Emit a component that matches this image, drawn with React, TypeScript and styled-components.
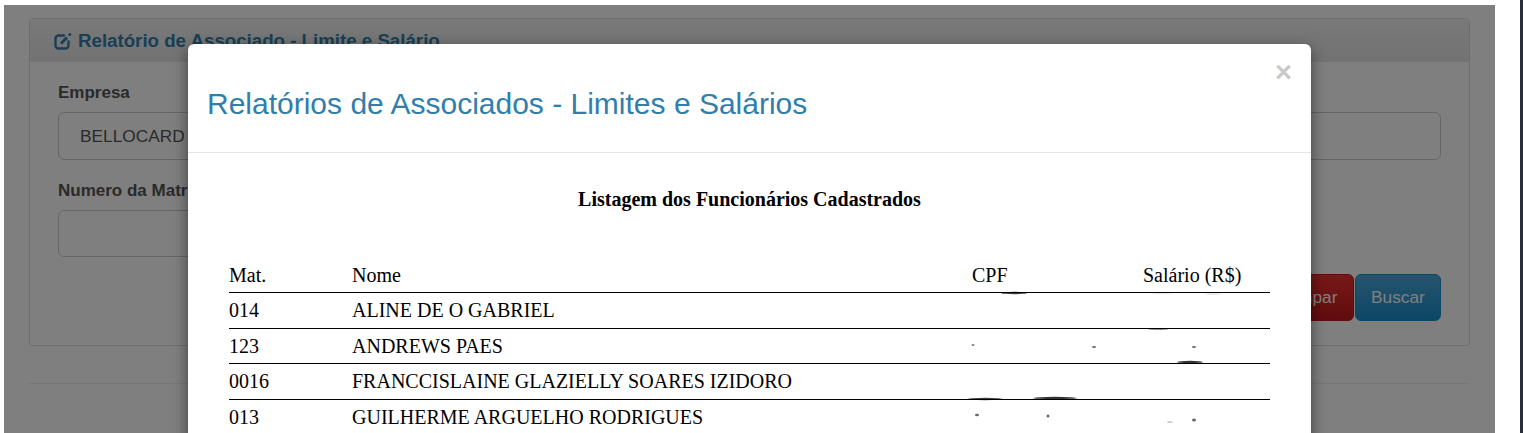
import React from "react";
import styled, { createGlobalStyle } from "styled-components";

const GlobalStyle = createGlobalStyle`
  html, body {
    margin: 0;
    height: 433px;
    overflow: hidden;
    background: #fff;
    font-family: "Liberation Sans", Arial, sans-serif;
    color: #555;
  }
`;

const Screen = styled.div`
  display: flex;
  height: 433px;
  padding: 5px 0 0 4px;
  box-sizing: border-box;
`;

const Page = styled.div`
  position: relative;
  width: 1491px;
  height: 428px;
  padding: 13px 25px 0;
  box-sizing: border-box;
  overflow: hidden;
  background: #fff;
  flex: none;
`;

const ScrollGutter = styled.div`
  width: 3px;
  height: 433px;
  margin: -5px 0 0 25px;
  background: #2a2e3a;
  flex: none;
`;

const Panel = styled.section`
  border: 1px solid #ddd;
  border-radius: 4px;
  height: 328px;
  box-sizing: border-box;
`;

const PanelHeading = styled.header`
  display: flex;
  align-items: center;
  gap: 6px;
  height: 43px;
  padding: 0 24px;
  box-sizing: border-box;
  background: linear-gradient(#f2f2f2, #e6e6e6);
  color: #317eac;
  font-size: 18.7px;
  font-weight: 700;
`;

const EditIcon = styled.svg`
  width: 18px;
  height: 18px;
  flex: none;
`;

const PanelBody = styled.div`
  display: flex;
  flex-direction: column;
  padding: 21px 28px 0;
`;

const Label = styled.label`
  font-size: 17px;
  font-weight: 700;
  line-height: 20px;
  margin-bottom: 9px;
`;

const Input = styled.div<{ $width?: string; $height: number }>`
  width: ${(p) => p.$width || "100%"};
  height: ${(p) => p.$height}px;
  padding-left: 21px;
  margin-bottom: 21px;
  display: flex;
  align-items: center;
  box-sizing: border-box;
  border: 1px solid #ccc;
  border-radius: 6px;
  font-size: 17.3px;
  color: #555;
`;

const Actions = styled.div`
  display: flex;
  justify-content: flex-end;
  gap: 1px;
  margin-top: -4px;
`;

const Button = styled.button<{ $top: string; $bottom: string; $width: number }>`
  width: ${(p) => p.$width}px;
  height: 47px;
  padding: 0;
  border: 1px solid ${(p) => p.$bottom};
  border-radius: 6px;
  background: linear-gradient(${(p) => p.$top}, ${(p) => p.$bottom});
  color: #fff;
  font-family: inherit;
  font-size: 17.3px;
`;

const Rule = styled.hr`
  margin: 37px 0 0;
  border: 0;
  border-top: 1px solid #eee;
`;

const Backdrop = styled.div`
  position: absolute;
  inset: 0;
  background: rgba(0, 0, 0, 0.5);
`;

const Modal = styled.div`
  position: absolute;
  left: 184px;
  top: 39px;
  width: 1123px;
  height: 500px;
  background: #fff;
  border-radius: 6px;
  box-shadow: 0 5px 15px rgba(0, 0, 0, 0.5);
`;

const ModalHeader = styled.header`
  display: flex;
  justify-content: space-between;
  height: 109px;
  padding: 0 19px;
  box-sizing: border-box;
  border-bottom: 1px solid #e5e5e5;
`;

const ModalTitle = styled.h4`
  margin: 41px 0 0;
  font-size: 30px;
  line-height: 38px;
  font-weight: 400;
  color: #317eac;
`;

const Close = styled.span`
  margin-top: 12px;
  font-size: 29px;
  line-height: 32px;
  font-weight: 700;
  color: #c9c9c9;
`;

const ModalBody = styled.div`
  position: relative;
  padding: 35px 41px 0;
  font-family: "Liberation Serif", "Times New Roman", serif;
  color: #000;
`;

const ReportTitle = styled.h2`
  margin: 0 0 52px;
  height: 22px;
  font-size: 20px;
  line-height: 22px;
  font-weight: 700;
  text-align: center;
`;

const Table = styled.table`
  width: 1041px;
  border-collapse: collapse;
  table-layout: fixed;
  font-size: 20px;
`;

const Head = styled.th<{ $width: number }>`
  width: ${(p) => p.$width}px;
  height: 30px;
  padding: 1px 0 0;
  box-sizing: border-box;
  font-weight: 400;
  text-align: left;
  vertical-align: top;
  line-height: 24px;
  border-bottom: 1px solid #000;
`;

const Cell = styled.td<{ $height: number; $last?: boolean }>`
  height: ${(p) => p.$height}px;
  padding: 0;
  line-height: 22px;
  border-bottom: ${(p) => (p.$last ? "0" : "1px solid #000")};
`;

const Smudges = styled.svg`
  position: absolute;
  left: 0;
  top: 0;
  width: 1123px;
  height: 400px;
  pointer-events: none;
`;

const rows = [
  { id: "014", name: "ALINE DE O GABRIEL", height: 35 },
  { id: "123", name: "ANDREWS PAES", height: 34 },
  { id: "0016", name: "FRANCCISLAINE GLAZIELLY SOARES IZIDORO", height: 35 },
  { id: "013", name: "GUILHERME ARGUELHO RODRIGUES", height: 35 },
];

// leftovers of the blurred CPF / salary values, in modal body coords
const marks = [
  [826, 140, 13, 1.2, 0.75],
  [974, 140, 11, 0.8, 0.12],
  [1025, 141, 9, 0.7, 0.1],
  [970, 176, 10, 1, 0.45],
  [785, 192, 1.5, 1, 0.5],
  [906, 194, 2, 1, 0.6],
  [1006, 194, 2, 1, 0.6],
  [1002, 209, 13, 1.2, 0.8],
  [797, 246, 18, 1.2, 0.75],
  [867, 245, 22, 1.2, 0.8],
  [789, 262, 2, 1.2, 0.6],
  [860, 263, 1.5, 1.6, 0.6],
  [982, 269, 3, 0.6, 0.4],
  [1006, 267, 2, 1.5, 0.6],
];

export default function App() {
  return (
    <>
      <GlobalStyle />
      <Screen>
        <Page>
          <Panel>
            <PanelHeading>
              <EditIcon viewBox="0 0 18 18" fill="none" stroke="currentColor">
                <path
                  d="M10 3.5H4.5A3 3 0 0 0 1.5 6.5v7a3 3 0 0 0 3 3h7a3 3 0 0 0 3-3V9.5"
                  strokeWidth="2.4"
                  strokeLinecap="round"
                />
                <path d="M7 11.5 13 5.5" strokeWidth="3" />
                <circle cx="15.8" cy="2.6" r="1.5" fill="currentColor" stroke="none" />
              </EditIcon>
              Relatório de Associado - Limite e Salário
            </PanelHeading>
            <PanelBody>
              <Label>Empresa</Label>
              <Input $height={48}>BELLOCARD</Input>
              <Label>Numero da Matrícula</Label>
              <Input $height={47} $width="600px" />
              <Actions>
                <Button $top="#f03030" $bottom="#c0181c" $width={86}>
                  Limpar
                </Button>
                <Button $top="#4ca8dc" $bottom="#1a8ccc" $width={86}>
                  Buscar
                </Button>
              </Actions>
            </PanelBody>
          </Panel>
          <Rule />
          <Backdrop />
          <Modal>
            <ModalHeader>
              <ModalTitle>Relatórios de Associados - Limites e Salários</ModalTitle>
              <Close>×</Close>
            </ModalHeader>
            <ModalBody>
              <ReportTitle>Listagem dos Funcionários Cadastrados</ReportTitle>
              <Table>
                <thead>
                  <tr>
                    <Head $width={123}>Mat.</Head>
                    <Head $width={620}>Nome</Head>
                    <Head $width={171}>CPF</Head>
                    <Head $width={127}>Salário (R$)</Head>
                  </tr>
                </thead>
                <tbody>
                  {rows.map((row, i) => {
                    const last = i === rows.length - 1;
                    return (
                      <tr key={row.id}>
                        <Cell $height={row.height} $last={last}>{row.id}</Cell>
                        <Cell $height={row.height} $last={last}>{row.name}</Cell>
                        <Cell $height={row.height} $last={last} />
                        <Cell $height={row.height} $last={last} />
                      </tr>
                    );
                  })}
                </tbody>
              </Table>
              <Smudges viewBox="0 0 1123 400">
                {marks.map(([x, y, rx, ry, o]) => (
                  <ellipse key={`${x}-${y}`} cx={x} cy={y} rx={rx} ry={ry} fill="#000" opacity={o} />
                ))}
              </Smudges>
            </ModalBody>
          </Modal>
        </Page>
        <ScrollGutter />
      </Screen>
    </>
  );
}
